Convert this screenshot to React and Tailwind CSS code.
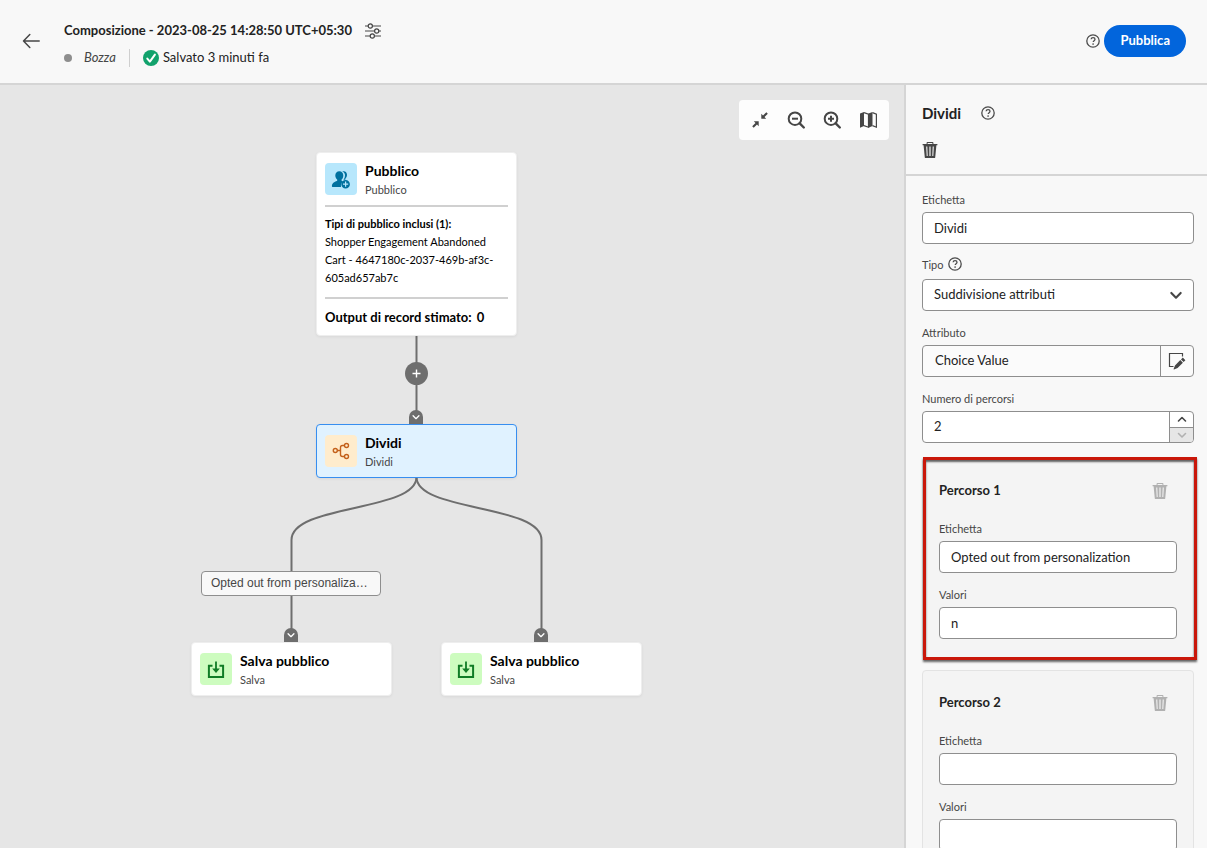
import React from 'react';

function HelpIcon({ className = 'size-[14px]' }) {
  return (
    <svg viewBox="0 0 14 14" className={className} fill="none" aria-hidden="true">
      <circle cx="7" cy="7" r="6.2" stroke="#4b4b4b" strokeWidth="1.3" />
      <path d="M5.1 5.3C5.2 4.3 6 3.7 7.1 3.7c1.1 0 1.9.6 1.9 1.5 0 1.4-1.8 1.5-1.8 2.9" stroke="#4b4b4b" strokeWidth="1.3" />
      <circle cx="7.1" cy="10" r=".85" fill="#4b4b4b" />
    </svg>
  );
}

function TrashIcon() {
  return (
    <svg viewBox="0 0 16 18" className="h-[18px] w-4" aria-hidden="true">
      <path fillRule="evenodd" fill="currentColor" d="M.6 3h4V1.8C4.600 1.300 5 1 5.400 1h5.200c.5 0 .8.300.8.8V3h4v1.300h-1L13.200 16.400c0 .3-.3.600-.6.600H3.400c-.3 0-.6-.3-.6-.6L1.600 4.300h-1zM5.600 3h4.800V2H5.600zM4.200 5.500l.5 9.500h1l-.4-9.500zM7.400 5.500V15h1.200V5.500zM10.700 5.500l-.4 9.500h1l.5-9.500z" />
    </svg>
  );
}

function Chevron({ up = false, className }) {
  return (
    <svg viewBox="0 0 12 12" className={className} fill="none" stroke="currentColor" strokeLinecap="round" strokeLinejoin="round" aria-hidden="true">
      <path d={up ? 'M2.500 8 6 4.500 9.500 8' : 'M2.500 4.500 6 8l3.500-3.500'} strokeWidth="1.6" />
    </svg>
  );
}

function PeopleIcon() {
  return (
    <svg viewBox="0 0 32 32" className="size-8" aria-hidden="true">
      <path fill="#00719f" d="M14.300 8.300c2.500 0 4 1.800 4 4.200 0 1.900-.8 3.300-1.700 4.100-.2.200-.2.900.100 1.200.4.300.9.500 1.500.7-1.800 1.200-2.600 3.400-2.200 5.500H7.500c-.4 0-.6-.3-.6-.7 0-3 2.400-4.400 5-5.300.4-.200.500-1 .2-1.400-1-1-1.800-2.300-1.800-4.100 0-2.500 1.600-4.200 4-4.200z" />
      <path fill="#00719f" d="M17.200 8.500c.5-.2 1-.3 1.500-.3 2 0 3.300 1.500 3.300 3.600 0 1.700-.7 2.900-1.500 3.700-.2.200-.2.700 0 .9-.7.100-1.300.300-1.800.600-.1-.5 0-.7.300-1.100.7-1 1-2.200 1-3.600 0-1.700-1-3.200-2.800-3.800z" />
      <path fillRule="evenodd" fill="#00719f" d="M20.600 16.900a4.300 4.300 0 1 0 0 8.600 4.300 4.300 0 0 0 0-8.600zm-.6 1.700h1.200v2h2v1.200h-2v2H20v-2h-2v-1.200h2z" />
    </svg>
  );
}

function SplitIcon() {
  return (
    <svg viewBox="0 0 32 32" className="size-8" fill="none" stroke="#c4611b" strokeWidth="1.400" aria-hidden="true">
      <circle cx="10.300" cy="15.500" r="2" />
      <circle cx="21.500" cy="10.500" r="2" />
      <circle cx="21.500" cy="21.500" r="2" />
      <path d="M12.400 15.500h3.100M19.400 10.500h-1.900a2 2 0 0 0-2 2v7a2 2 0 0 0 2 2h1.900" />
    </svg>
  );
}

function SaveIcon() {
  return (
    <svg viewBox="0 0 32 32" className="size-8" fill="none" stroke="#107c26" aria-hidden="true">
      <path d="M12.500 12.800H8.900v11.200h14.200V12.800H19.500" strokeWidth="2" />
      <path d="M16 8.500v8" strokeWidth="1.800" />
      <path d="M12.200 15.400h7.600L16 20z" fill="#107c26" stroke="none" />
    </svg>
  );
}

function Node({ place, icon, tile, title, kind, skin = 'bg-white border-[#eeeeee]', children }) {
  return (
    <article className={`absolute w-[201px] rounded border px-2 pt-2 pb-1.5 shadow-[0_1px_3px_rgba(0,0,0,0.06)] ${skin} ${place}`}>
      <div className="flex items-start gap-2">
        <div className={`mt-0.5 overflow-hidden rounded ${tile}`}>{icon}</div>
        <div className="leading-[19px]">
          <h2 className="text-[14px] font-bold text-black">{title}</h2>
          <p className="text-[11px] text-[#464646]">{kind}</p>
        </div>
      </div>
      {children}
    </article>
  );
}

function Tab({ place }) {
  return (
    <button type="button" aria-label="Comprimi" className={`absolute flex h-[14px] w-[14px] items-center justify-center rounded-t-[7px] bg-[#6e6e6e] text-white ${place}`}>
      <Chevron className="size-[10px]" />
    </button>
  );
}

function Field({ id, label, help, children }) {
  return (
    <div>
      <div className={`flex items-center gap-1 ${help ? 'h-[25px] pb-0.5' : 'h-6'}`}>
        <label htmlFor={id} className="text-[11px] text-[#464646]">{label}</label>
        {help && <button type="button" aria-label="Aiuto" className="mb-1"><HelpIcon /></button>}
      </div>
      {children}
    </div>
  );
}

const box = 'h-8 w-full rounded border border-[#8e8e8e] bg-white px-[11px] text-[13px] text-[#222222]';

function PathCard({ n, value, values, marked }) {
  return (
    <section className="relative rounded border border-[#e3e3e3] bg-[#f4f4f4] p-4">
      <div className="flex h-8 items-center justify-between">
        <h3 className="text-[13px] font-bold text-[#222222]">Percorso {n}</h3>
        <button type="button" aria-label={`Elimina percorso ${n}`} className="mr-[9px] text-[#b1b1b1]"><TrashIcon /></button>
      </div>
      <div className="mt-2.5 flex flex-col gap-2.5 pb-0.5">
        <Field id={`etichetta-${n}`} label="Etichetta">
          <input id={`etichetta-${n}`} type="text" defaultValue={value} className={box} />
        </Field>
        <Field id={`valori-${n}`} label="Valori">
          <input id={`valori-${n}`} type="text" defaultValue={values} className={box} />
        </Field>
      </div>
      {marked && (
        <div className="pointer-events-none absolute -top-0.5 -right-1 -bottom-[3px] left-0 border-[3px] border-[#c9170a] shadow-[0_2px_2px_rgba(0,0,0,0.6),inset_0_2px_2px_rgba(0,0,0,0.6)]" />
      )}
    </section>
  );
}

export default function App() {
  return (
    <div className="flex h-screen flex-col overflow-hidden bg-[#f8f8f8] font-['Lato','Noto_Sans',sans-serif] text-[13px] text-[#222222]">
      <header className="flex h-[85px] shrink-0 items-center border-b-2 border-[#d5d5d5] pr-[21px] pb-0.5 pl-[22px]">
        <button type="button" aria-label="Indietro" className="text-[#464646]">
          <svg viewBox="0 0 18 18" className="size-[18px]" fill="none" stroke="currentColor" strokeWidth="1.500" strokeLinecap="round" strokeLinejoin="round" aria-hidden="true">
            <path d="M17.200 9H1.500M7.800 2.500 1.500 9l6.300 6.500" />
          </svg>
        </button>
        <div className="ml-6 flex flex-col gap-[7px] pt-2">
          <div className="flex h-5 items-center gap-3">
            <h1 className="text-[13px] font-bold">Composizione - 2023-08-25 14:28:50 UTC+05:30</h1>
            <button type="button" aria-label="Impostazioni" className="text-[#464646]">
              <svg viewBox="0 0 18 16" className="h-4 w-[18px]" fill="none" stroke="currentColor" strokeWidth="1.200" aria-hidden="true">
                <path d="M1 3h3.200M8.400 3H17M1 8h9.600M14.800 8H17M1 13h5.200M10.400 13H17" />
                <circle cx="6.300" cy="3" r="2.100" />
                <circle cx="12.700" cy="8" r="2.100" />
                <circle cx="8.300" cy="13" r="2.100" />
              </svg>
            </button>
          </div>
          <div className="flex h-5 items-center">
            <span className="size-2 rounded-full bg-[#8e8e8e]" />
            <span className="ml-3 text-[#464646] italic">Bozza</span>
            <span className="mx-[13px] h-[18px] w-px bg-[#cfcfcf]" />
            <svg viewBox="0 0 16 16" className="size-4" aria-hidden="true">
              <circle cx="8" cy="8" r="8" fill="#12a26c" />
              <path d="m4.300 8.600 2.600 3 5-7" fill="none" stroke="#fff" strokeWidth="2" strokeLinecap="round" strokeLinejoin="round" />
            </svg>
            <span className="ml-1">Salvato 3 minuti fa</span>
          </div>
        </div>
        <div className="ml-auto flex items-center gap-1">
          <button type="button" aria-label="Aiuto"><HelpIcon /></button>
          <button type="button" className="h-8 rounded-full bg-[#0265dc] px-4 text-[13px] font-bold text-white">Pubblica</button>
        </div>
      </header>

      <div className="flex min-h-0 flex-1">
        <main className="relative min-w-0 flex-1 overflow-hidden bg-[#e6e6e6]">
          <svg className="absolute top-0 left-0 h-[560px] w-[660px]" viewBox="0 0 660 560" fill="none" stroke="#6e6e6e" strokeWidth="2" aria-hidden="true">
            <path d="M416.500 250v90" />
            <path d="M416.500 392C416.500 427 291.500 419 291.500 455V545" />
            <path d="M416.500 392C416.500 427 541.500 419 541.500 455V545" />
          </svg>

          <button type="button" aria-label="Aggiungi" className="absolute top-[277px] left-[405px] flex size-[23px] items-center justify-center rounded-full bg-[#6e6e6e]">
            <svg viewBox="0 0 9 9" className="size-[9px]" stroke="#fff" strokeWidth="1.400" aria-hidden="true">
              <path d="M4.500.5v8M.5 4.500h8" />
            </svg>
          </button>
          <Tab place="top-[325px] left-[409px]" />
          <Tab place="top-[543px] left-[284px]" />
          <Tab place="top-[543px] left-[534px]" />

          <Node place="top-[67px] left-[316px]" icon={<PeopleIcon />} tile="bg-[#b7e7fc]" title="Pubblico" kind="Pubblico">
            <div className="mt-1.5 border-y-2 border-[#d0d0d0] pt-2 pb-2.5 text-[11px] leading-[18px] text-black">
              <p className="font-bold">Tipi di pubblico inclusi (1):</p>
              <p>Shopper Engagement Abandoned Cart - 4647180c-2037-469b-af3c-605ad657ab7c</p>
            </div>
            <p className="mt-2 mb-0.5 text-[13px] leading-5 font-bold text-black">
              Output di record stimato: <span className="ml-0.5">0</span>
            </p>
          </Node>
          <Node place="top-[339px] left-[316px]" icon={<SplitIcon />} tile="bg-[#ffeccc]" title="Dividi" kind="Dividi" skin="bg-[#e0f2ff] border-[#378ef0]" />
          <Node place="top-[557px] left-[191px]" icon={<SaveIcon />} tile="bg-[#cdfcbf]" title="Salva pubblico" kind="Salva" />
          <Node place="top-[557px] left-[441px]" icon={<SaveIcon />} tile="bg-[#cdfcbf]" title="Salva pubblico" kind="Salva" />

          <div className="absolute top-[486px] left-[201px] h-[25px] w-[180px] truncate rounded border border-[#8e8e8e] bg-[#f8f8f8] px-[9px] font-['Liberation_Sans',sans-serif] text-[12px] leading-[23px] text-[#464646]">
            Opted out from personaliza…
          </div>

          <div className="absolute top-[15px] right-[15px] flex h-10 items-center gap-4 rounded bg-[#fdfdfd] px-[11px] text-[#464646]">
            <button type="button" aria-label="Adatta">
              <svg viewBox="0 0 20 20" className="size-5" fill="currentColor" aria-hidden="true">
                <path d="M11.300 3.800v4.900h4.900l-1.700-1.700 3.300-3.300-1.500-1.500-3.300 3.300zM8.700 16.200v-4.900H3.800L5.500 13l-3.300 3.300 1.500 1.500L7 14.500z" />
              </svg>
            </button>
            <button type="button" aria-label="Riduci">
              <svg viewBox="0 0 20 20" className="size-5" fill="none" stroke="currentColor" strokeWidth="2" aria-hidden="true">
                <circle cx="9" cy="8.700" r="6.300" />
                <path d="M6 8.700h6" />
                <path d="m13.700 13.400 4.100 4.100" strokeWidth="2.400" strokeLinecap="round" />
              </svg>
            </button>
            <button type="button" aria-label="Ingrandisci">
              <svg viewBox="0 0 20 20" className="size-5" fill="none" stroke="currentColor" strokeWidth="2" aria-hidden="true">
                <circle cx="9" cy="8.700" r="6.300" />
                <path d="M6 8.700h6M9 5.700v6" />
                <path d="m13.700 13.400 4.100 4.100" strokeWidth="2.400" strokeLinecap="round" />
              </svg>
            </button>
            <button type="button" aria-label="Mappa">
              <svg viewBox="0 0 20 20" className="size-5" fill="none" aria-hidden="true">
                <path d="M2 3.500 6 2v14l-4 1.800zM10.500 3.500l4-1.500v14l-4 1.800z" fill="currentColor" />
                <path d="M6 2.600l4.500 1.600v13L6 15.600M14.500 2.600l3.900 1.600v13l-3.900-1.600" stroke="currentColor" strokeWidth="1.200" />
              </svg>
            </button>
          </div>
        </main>

        <aside className="flex w-[303px] shrink-0 flex-col border-l-2 border-[#d5d5d5]">
          <div className="flex flex-col items-start gap-[17px] border-b-2 border-[#d5d5d5] px-4 pt-[17px] pb-[15px]">
            <div className="flex h-[22px] items-center gap-5">
              <h2 className="text-[15px] font-bold">Dividi</h2>
              <button type="button" aria-label="Aiuto"><HelpIcon /></button>
            </div>
            <button type="button" aria-label="Elimina" className="text-[#464646]"><TrashIcon /></button>
          </div>

          <form className="flex min-h-0 flex-1 flex-col gap-2.5 overflow-y-auto pt-3 pr-[13px] pb-4 pl-4 [scrollbar-width:none]">
            <Field id="etichetta" label="Etichetta">
              <input id="etichetta" type="text" defaultValue="Dividi" className={box} />
            </Field>
            <Field id="tipo" label="Tipo" help>
              <div className="relative">
                <select id="tipo" className={`appearance-none ${box}`}>
                  <option>Suddivisione attributi</option>
                </select>
                <Chevron className="pointer-events-none absolute top-2 right-2.5 size-4 text-[#464646]" />
              </div>
            </Field>
            <Field id="attributo" label="Attributo">
              <div className="flex h-8 overflow-hidden rounded border border-[#8e8e8e] bg-[#fbfbfb]">
                <input id="attributo" type="text" defaultValue="Choice Value" className="min-w-0 flex-1 px-3 text-[13px] text-[#222222]" />
                <button type="button" aria-label="Modifica attributo" className="flex w-[33px] items-center justify-center border-l border-[#8e8e8e] text-[#464646]">
                  <svg viewBox="0 0 18 18" className="size-[18px]" aria-hidden="true">
                    <path d="M5.500 14.500H1.500V1.500h13v3" fill="none" stroke="currentColor" strokeWidth="1.200" />
                    <path d="m14.800 5.600 2.600 2.600-1.800 1.800-2.600-2.600zM12.300 8.100l2.600 2.600-5.300 5.300-3.600 1.500c-.3.100-.5-.1-.4-.4L7 13.400z" fill="currentColor" />
                  </svg>
                </button>
              </div>
            </Field>
            <Field id="percorsi" label="Numero di percorsi">
              <div className="flex h-8 overflow-hidden rounded border border-[#8e8e8e] bg-white">
                <input id="percorsi" type="number" defaultValue="2" className="min-w-0 flex-1 [appearance:textfield] px-[11px] text-[13px] text-[#222222] [&::-webkit-inner-spin-button]:appearance-none" />
                <div className="flex w-6 flex-col border-l border-[#8e8e8e]">
                  <button type="button" aria-label="Aumenta" className="flex flex-1 items-center justify-center text-[#464646]"><Chevron up className="size-3" /></button>
                  <button type="button" aria-label="Diminuisci" disabled className="flex flex-1 items-center justify-center border-t border-[#8e8e8e] bg-[#e6e6e6] text-[#b1b1b1]"><Chevron className="size-3" /></button>
                </div>
              </div>
            </Field>
            <div className="flex flex-col gap-3 pt-[5px]">
              <PathCard n={1} value="Opted out from personalization" values="n" marked />
              <PathCard n={2} value="" values="" />
            </div>
          </form>
        </aside>
      </div>
    </div>
  );
}
